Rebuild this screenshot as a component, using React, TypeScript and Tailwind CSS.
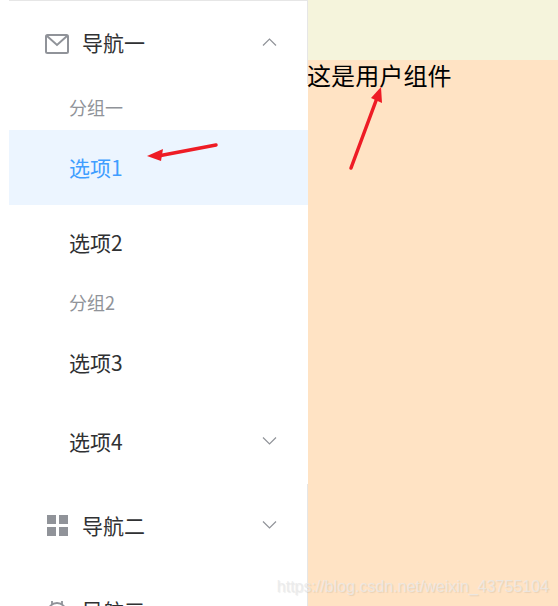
const font = "font-['Noto_Sans_CJK_SC','Noto_Sans',sans-serif]"

const Chevron = ({ up }: { up?: boolean }) => (
  <svg className={up ? "-mt-[3px]" : "-mt-[1px]"} width="15" height="8" viewBox="0 0 15 8" fill="none" stroke="#909399" strokeWidth="1.2">
    <path d={up ? "M1 7.5 L7.5 1 L14 7.5" : "M1 .5 L7.5 7 L14 .5"} />
  </svg>
)

const MailIcon = () => (
  <svg className="mt-[2px]" width="24" height="20" viewBox="0 0 24 20" fill="none" stroke="#909399" strokeWidth="2">
    <rect x="1" y="1" width="22" height="18" rx="1.5" />
    <path d="M2 2 L12 11 L22 2" />
  </svg>
)

const GridIcon = () => (
  <div className="grid h-[21px] w-[21px] grid-cols-2 gap-[3px]">
    <div className="bg-[#909399]" />
    <div className="bg-[#909399]" />
    <div className="bg-[#909399]" />
    <div className="bg-[#909399]" />
  </div>
)

const SettingIcon = () => (
  <svg width="22" height="22" viewBox="0 0 22 22" fill="none" stroke="#909399" strokeWidth="1.8">
    <circle cx="11" cy="12" r="9" />
    <path d="M6 1 V5 M16 1 V5" />
  </svg>
)

const Option = ({ label, active }: { label: string; active?: boolean }) => (
  <div className={`flex h-[75px] items-center pl-[60px] text-[21px] ${active ? "bg-[#ecf5ff] text-[#409eff]" : "text-[#303133]"}`}>
    {label}
  </div>
)

const Group = ({ label }: { label: string }) => (
  <div className="flex h-[45px] items-center pl-[60px] text-[18px] text-[#909399]">{label}</div>
)

const Nav = ({ icon, label, up, className }: { icon: React.ReactNode; label: string; up?: boolean; className: string }) => (
  <div className={`flex items-center justify-between pl-[36px] pr-[31px] text-[21px] text-[#303133] ${className}`}>
    <div className="flex items-center">
      <div className="flex w-[24px] justify-center">{icon}</div>
      <span className="ml-[13px]">{label}</span>
    </div>
    <Chevron up={up} />
  </div>
)

export default function App() {
  return (
    <div className={`relative flex h-[606px] w-[558px] overflow-hidden bg-white ${font}`}>
      <div className="relative h-full w-[308px] shrink-0 pl-[9px]">
        <div className="h-px bg-[#e6e6e6]" />
        <Nav icon={<MailIcon />} label="导航一" up className="h-[84px]" />
        <Group label="分组一" />
        <Option label="选项1" active />
        <Option label="选项2" />
        <Group label="分组2" />
        <Option label="选项3" />
        <div className="h-[4px]" />
        <div className="flex h-[75px] items-center justify-between pl-[60px] pr-[31px] text-[21px] text-[#303133]">
          <span>选项4</span>
          <Chevron />
        </div>
        <div className="h-[9px]" />
        <Nav icon={<GridIcon />} label="导航二" className="h-[75px]" />
        <div className="h-[10px]" />
        <Nav icon={<SettingIcon />} label="导航三" className="h-[75px]" />
        <div className="absolute right-0 top-0 h-[84px] w-px bg-[#e6e6e6]" />
        <div className="absolute bottom-0 right-0 h-[122px] w-px bg-[#e6e6e6]" />
      </div>
      <div className="flex-1 bg-[#ffe3c4]">
        <div className="h-[60px] bg-[#f5f4dc]" />
        <div className="text-[24px] leading-[29px] text-black -ml-px tracking-[0.1px]">这是用户组件</div>
      </div>
      <svg className="absolute left-0 top-0" width="558" height="606" fill="none">
        <path d="M216 145 L158 156" stroke="#ee1c25" strokeWidth="3.5" strokeLinecap="round" />
        <path d="M147 156 L163 149 L161 161 Z" fill="#ee1c25" />
        <path d="M351 168 L377 98" stroke="#ee1c25" strokeWidth="3.5" strokeLinecap="round" />
        <path d="M381 87 L371 98 L382 103 Z" fill="#ee1c25" />
      </svg>
      <div className="absolute bottom-[9px] right-[9px] font-['Liberation_Sans',sans-serif] text-[16px] leading-[20px] text-[#e9e9e9]/80 [text-shadow:1px_1px_1px_rgba(0,0,0,0.08)]">
        https://blog.csdn.net/weixin_43755104
      </div>
    </div>
  )
}
